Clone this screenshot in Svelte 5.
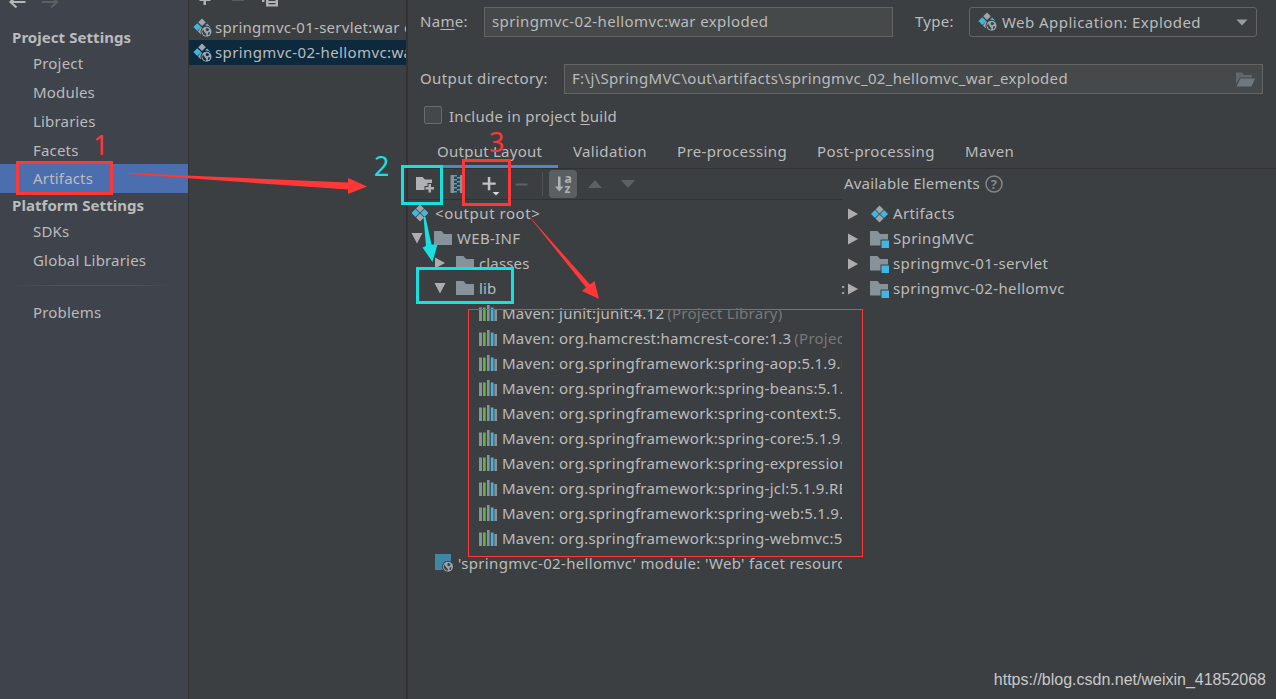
<script lang="ts">
  const projectItems = ["Project", "Modules", "Libraries", "Facets", "Artifacts"];
  const platformItems = ["SDKs", "Global Libraries"];
  const selectedItem = "Artifacts";

  const artifacts = [
    "springmvc-01-servlet:war exploded",
    "springmvc-02-hellomvc:war exploded",
  ];

  const tabs = [
    "Output Layout",
    "Validation",
    "Pre-processing",
    "Post-processing",
    "Maven",
  ];

  const libraries = [
    { name: "Maven: junit:junit:4.12", note: "(Project Library)" },
    { name: "Maven: org.hamcrest:hamcrest-core:1.3", note: "(Project Library)" },
    { name: "Maven: org.springframework:spring-aop:5.1.9.RELEASE" },
    { name: "Maven: org.springframework:spring-beans:5.1.9.RELEASE" },
    { name: "Maven: org.springframework:spring-context:5.1.9.RELEASE" },
    { name: "Maven: org.springframework:spring-core:5.1.9.RELEASE" },
    { name: "Maven: org.springframework:spring-expression:5.1.9.RELEASE" },
    { name: "Maven: org.springframework:spring-jcl:5.1.9.RELEASE" },
    { name: "Maven: org.springframework:spring-web:5.1.9.RELEASE" },
    { name: "Maven: org.springframework:spring-webmvc:5.1.9.RELEASE" },
  ];

  const modules = ["SpringMVC", "springmvc-01-servlet", "springmvc-02-hellomvc"];
</script>

{#snippet diamonds()}
  <svg class="icon" width="18" height="18" viewBox="0 0 18 18">
    <path d="M9 0.5l4 4-4 4-4-4zM9 9.5l4 4-4 4-4-4z" fill="#9aa7b0" />
    <path d="M4.5 5l4 4-4 4-4-4zM13.5 5l4 4-4 4-4-4z" fill="#40b6e0" />
  </svg>
{/snippet}

{#snippet globe(bg)}
  <circle cx="13.5" cy="13.8" r="6" fill={bg} />
  <circle cx="13.5" cy="13.8" r="5" fill="#9aa7b0" />
  <path
    d="M10 11.6l2 3.2 1.4 1.2-.4 2-2.6-1.6-1.2-2.6zM13.6 9.8l2.6 1.4-.8 1.5-1.8.6-1-1.6zM15.2 14.2l2 .4-1.2 2.4-1.2-.4z"
    fill={bg}
  />
{/snippet}

{#snippet webArtifact(bg)}
  <svg class="icon" width="19" height="20" viewBox="0 0 19 20">
    <path d="M9 0.5l3.8 3.8-3.8 3.8-3.8-3.8zM8 9l3.5 3.5-3.5 4-3-3z" fill="#9aa7b0" />
    <path d="M4.3 5.2l3.9 3.9-3.9 3.9-3.9-3.9zM12.2 7.2l2-1.8 3 3.4v1z" fill="#40b6e0" />
    {@render globe(bg)}
  </svg>
{/snippet}

{#snippet folder()}
  <svg class="icon" width="18" height="16" viewBox="0 0 18 16">
    <path d="M0 1h7.5l2.5 3h8v11H0z" fill="#87939a" />
  </svg>
{/snippet}

{#snippet moduleFolder()}
  <svg class="icon" width="19" height="18" viewBox="0 0 19 18">
    <path d="M0 1h7.5l2.5 3h8v5.5h-7.5v6H0z" fill="#87939a" />
    <path d="M11.5 10.5h7.5v7.5h-7.5z" fill="#40b6e0" />
  </svg>
{/snippet}

{#snippet library()}
  <svg class="icon" width="18" height="16" viewBox="0 0 18 16">
    <path d="M0 2.5h3V16H0zM8 0h2.6v16H8zM15.3 4H18v12h-2.7z" fill="#87939a" />
    <path d="M4 2.5h2.7V16H4z" fill="#62b543" />
    <path d="M11.8 2.5h2.7V16h-2.7z" fill="#40b6e0" />
  </svg>
{/snippet}

{#snippet arrow(open)}
  <svg class="arrow" width="12" height="12" viewBox="0 0 12 12">
    <path d={open ? "M0.5 1h11L6 11.5z" : "M1 0.5L11 6 1 11.5z"} fill="#adadad" />
  </svg>
{/snippet}

<div class="window">
  <aside class="sidebar">
    <div class="history">
      <svg width="60" height="9" viewBox="0 0 60 9" fill="none" stroke-width="2.2">
        <path d="M16.5 2H1M7.5 -4L1.5 2l6 5.5" stroke="#b4b6b8" />
        <path d="M33 2h15.5M42 -4l6 6-6 5.5" stroke="#5d6062" />
      </svg>
    </div>
    <div class="heading">Project Settings</div>
    {#each projectItems as item}
      <div class="nav" class:selected={item === selectedItem}>{item}</div>
    {/each}
    <div class="heading">Platform Settings</div>
    {#each platformItems as item}
      <div class="nav">{item}</div>
    {/each}
    <div class="divider"></div>
    <div class="nav">Problems</div>
  </aside>

  <section class="artifacts">
    <div class="list-tools">
      <svg width="90" height="8" viewBox="0 0 90 8">
        <path d="M7.5 0H10v5H7.5zM3.5 0h11v1h-11z" fill="#afb1b3" />
        <path d="M36 0h12v1H36z" fill="#5a5d5f" />
        <path d="M66 0h2.5v2H66zM70 0h12v6.5H70z" fill="#afb1b3" />
        <path d="M72.5 0h7v1h-7zM72.5 3h7v1.3h-7z" fill="#3c3f41" />
      </svg>
    </div>
    {#each artifacts as artifact, i}
      <div class="artifact" class:active={i === 1}>
        {@render webArtifact(i === 1 ? "#0d293e" : "#3c3f41")}
        <span>{artifact}</span>
      </div>
    {/each}
  </section>

  <main class="editor">
    <div class="form-row name-row">
      <span class="label name-label">Na<u>m</u>e:</span>
      <div class="field name-field">springmvc-02-hellomvc:war exploded</div>
      <span class="label type-label">Type:</span>
      <div class="combo">
        {@render webArtifact("#3c3f41")}
        <span>Web Application: Exploded</span>
        <svg class="caret" width="12" height="7" viewBox="0 0 12 7">
          <path d="M0.5 0.5h11L6 6.5z" fill="#9a9da0" />
        </svg>
      </div>
    </div>

    <div class="form-row dir-row">
      <span class="label dir-label">Output directory:</span>
      <div class="field dir-field">
        <span>F:\j\SpringMVC\out\artifacts\springmvc_02_hellomvc_war_exploded</span>
        <svg width="19" height="15" viewBox="0 0 19 15">
          <path d="M0 0.5h6l2 2.5h8v2.5H4L0 12z" fill="#5f686d" />
          <path d="M4.5 6.5H19L15.5 14.5H0.5z" fill="#6e797f" />
        </svg>
      </div>
    </div>

    <div class="check-row">
      <span class="checkbox"></span>
      <span class="label">Include in project <u>b</u>uild</span>
    </div>

    <div class="tabs">
      {#each tabs as tab, i}
        <div class="tab tab-{i}" class:current={i === 0}>{tab}</div>
      {/each}
    </div>

    <div class="panes">
      <div class="layout-pane">
        <div class="toolbar">
          <svg class="new-folder" width="19" height="17" viewBox="0 0 19 17">
            <path d="M0 1h6.5L9 3.5h7V7h-4.5v3H8.5v4H0z" fill="#afb1b3" />
            <path d="M12.5 8H15v3h3v2.5h-3v3h-2.5v-3h-3V11h3z" fill="#afb1b3" />
          </svg>
          <svg class="archive" width="13" height="18" viewBox="0 0 13 18">
            <path d="M0.5 0H13v18H0.5z" fill="#87939a" />
            <path d="M4 0h6v18H4z" fill="#31414a" />
            <path
              d="M4 0h3v1.5H4zM7 2h3v1.5H7zM4 4h3v1.5H4zM7 6h3v1.5H7zM4 8h3v1.5H4zM7 10h3v1.5H7zM4 12h3v1.5H4zM7 14h3v1.5H7zM4 16h3v1.5H4z"
              fill="#4aa3c4"
            />
          </svg>
          <svg class="add" width="18" height="19" viewBox="0 0 18 19">
            <path d="M5.8 0h2.5v5.5h5.4v2.3H8.3v5.4H5.8V7.8H0.5V5.5h5.3z" fill="#c0c2c4" />
            <path d="M10.5 15h7L14 18.5z" fill="#d4d6d8" />
          </svg>
          <svg class="remove" width="13" height="3" viewBox="0 0 13 3">
            <path d="M0.5 0.5h12v2H0.5z" fill="#5e6163" />
          </svg>
          <span class="tool-divider"></span>
          <span class="sort">
            <svg width="28" height="28" viewBox="0 0 28 28">
              <path d="M9 6.5h2.5v10h3L10.3 21.5 6 16.5h3z" fill="#afb1b3" />
              <text x="15.5" y="13">a</text>
              <text x="15.5" y="22.5">z</text>
            </svg>
          </span>
          <svg class="up" width="14" height="8" viewBox="0 0 14 8">
            <path d="M0 8h14L7 0z" fill="#5e6163" />
          </svg>
          <svg class="down" width="14" height="8" viewBox="0 0 14 8">
            <path d="M0 0h14L7 8z" fill="#5e6163" />
          </svg>
        </div>

        <div class="tree">
          <div class="row root">
            {@render diamonds()}<span>&lt;output root&gt;</span>
          </div>
          <div class="row webinf">
            {@render arrow(true)}{@render folder()}<span>WEB-INF</span>
          </div>
          <div class="row child">
            {@render arrow(false)}{@render folder()}<span>classes</span>
          </div>
          <div class="row child">
            {@render arrow(true)}{@render folder()}<span>lib</span>
          </div>
          {#each libraries as lib}
            <div class="row lib">
              {@render library()}
              <span>{lib.name}{#if lib.note}<em>{lib.note}</em>{/if}</span>
            </div>
          {/each}
          <div class="row facet">
            <svg class="icon" width="19" height="18" viewBox="0 0 19 18">
              <path d="M0 0h16v16H0z" fill="#3e87a5" />
              <g transform="translate(-0.5 -1)">{@render globe("#3c3f41")}</g>
            </svg>
            <span>'springmvc-02-hellomvc' module: 'Web' facet resources</span>
          </div>
        </div>
      </div>

      <div class="elements-pane">
        <div class="elements-title">
          <span>Available Elements</span>
          <svg width="18" height="18" viewBox="0 0 18 18">
            <circle cx="9" cy="9" r="8" fill="none" stroke="#84878a" stroke-width="1.5" />
            <text x="9" y="13.5" text-anchor="middle">?</text>
          </svg>
        </div>
        <div class="row element">
          {@render arrow(false)}{@render diamonds()}<span>Artifacts</span>
        </div>
        {#each modules as module, i}
          <div class="row element" class:clipped={i === 2}>
            {@render arrow(false)}{@render moduleFolder()}<span>{module}</span>
          </div>
        {/each}
      </div>
    </div>
  </main>

  <!-- walkthrough marks drawn over the dialog -->
  <svg class="marks" width="1276" height="699" viewBox="0 0 1276 699">
    <g fill="none" stroke="#ff3737">
      <rect x="17.5" y="162.5" width="94" height="31" stroke-width="3" />
      <rect x="463.5" y="160.5" width="46" height="44" stroke-width="3" />
      <rect x="468.5" y="309.5" width="394" height="247" stroke-width="1" />
    </g>
    <g fill="none" stroke="#18dfe0" stroke-width="3">
      <rect x="402.5" y="166.5" width="39" height="37" />
      <rect x="417.5" y="268.5" width="95" height="34" />
    </g>
    <path d="M128 173L348 182.5V178L367 186.5L348 194V189.5L128 174z" fill="#ff3737" />
    <path d="M525.5 212L590 284.5L594.5 281L599 299L582 291L586 287.5z" fill="#ff3737" />
    <path d="M423.5 217h2L431.5 244.5H437.5L432.500 262L422.500 247.500L426 246z" fill="#18dfe0" />
    <text class="one" x="93" y="155">1</text>
    <text class="two" x="374" y="176">2</text>
    <text class="three" x="489" y="152">3</text>
  </svg>

  <div class="watermark">https://blog.csdn.net/weixin_41852068</div>
</div>

<style>
  :global(body) {
    margin: 0;
    background: #3c3f41;
  }

  .window {
    position: relative;
    display: flex;
    width: 1276px;
    height: 699px;
    overflow: hidden;
    background: #3c3f41;
    color: #bbbbbb;
    font-family: "Noto Sans", "Open Sans", sans-serif;
    font-size: 15px;
    letter-spacing: 0.3px;
    line-height: 25px;
    white-space: nowrap;
  }

  svg {
    display: block;
    flex-shrink: 0;
  }

  u {
    text-decoration: underline;
    text-underline-offset: 2px;
  }

  /* Sidebar */
  .sidebar {
    box-sizing: border-box;
    width: 189px;
    flex-shrink: 0;
    border-right: 1px solid #323232;
    background: #3f434c;
    letter-spacing: 0.18px;
  }

  .history {
    height: 25px;
    padding-left: 9px;
  }

  .heading {
    height: 24px;
    padding-left: 12px;
    font-weight: 700;
    letter-spacing: 0.06px;
  }

  .nav {
    height: 29px;
    padding-left: 33px;
    line-height: 28px;
  }

  .nav.selected {
    margin-top: -1px;
    background: #4b6eaf;
  }

  .divider {
    height: 1px;
    margin: 10px 12px 12px;
    background: linear-gradient(90deg, transparent, #505358 25%, #505358 75%, transparent);
  }

  /* Artifact list */
  .artifacts {
    box-sizing: border-box;
    width: 219px;
    flex-shrink: 0;
    border-right: 2px solid #323232;
    overflow: hidden;
  }

  .list-tools {
    height: 15px;
    padding-left: 7px;
  }

  .artifact {
    display: flex;
    align-items: center;
    gap: 3px;
    height: 25px;
    padding-left: 4px;
    letter-spacing: 0.27px;
  }

  .artifact.active {
    background: #0d293e;
    letter-spacing: 0.38px;
  }

  /* Form */
  .editor {
    flex: 1;
    min-width: 0;
  }

  .form-row {
    display: flex;
    align-items: center;
    height: 30px;
    padding-left: 12px;
  }

  .form-row .label {
    margin-top: -2px;
  }

  .name-row {
    padding-top: 7px;
  }

  .dir-row {
    margin-top: 27px;
  }

  .field,
  .combo {
    box-sizing: border-box;
    height: 30px;
    border: 1px solid #646464;
    line-height: 28px;
  }

  .field {
    padding-left: 7px;
    background: #45494a;
    line-height: 26px;
  }

  .name-label {
    width: 64px;
  }

  .name-field {
    width: 409px;
    letter-spacing: 0.38px;
  }

  .type-label {
    width: 54px;
    margin-left: 22px;
  }

  .combo {
    display: flex;
    align-items: center;
    width: 288px;
    padding: 0 8px;
    border-radius: 3px;
    letter-spacing: 0.46px;
  }

  .combo span {
    margin-left: 5px;
  }

  .caret {
    margin-left: auto;
  }

  .dir-label {
    width: 144px;
    letter-spacing: 0.4px;
  }

  .dir-field {
    display: flex;
    align-items: center;
    justify-content: space-between;
    width: 699px;
    padding-right: 7px;
    letter-spacing: 0.33px;
  }

  .dir-field span {
    margin-top: -2px;
  }

  .check-row {
    display: flex;
    align-items: center;
    gap: 7px;
    height: 26px;
    padding: 9px 0 0 16px;
    letter-spacing: 0.26px;
  }

  .checkbox {
    box-sizing: border-box;
    width: 18px;
    height: 18px;
    margin-top: -3px;
    border: 1px solid #6b6b6b;
    border-radius: 2px;
    background: #43494a;
  }

  /* Tabs */
  .tabs {
    box-sizing: border-box;
    display: flex;
    height: 40px;
    padding-left: 12px;
    border-bottom: 1px solid #323232;
  }

  .tab {
    box-sizing: border-box;
    height: 39px;
    padding: 10px 0 0 17px;
    letter-spacing: 0.37px;
  }

  .tab.current {
    border-bottom: 3px solid #4a88c7;
    letter-spacing: 0.25px;
  }

  .tab-0 {
    width: 138px;
    margin-right: -2px;
  }

  .tab-1 {
    width: 104px;
  }

  .tab-2 {
    width: 140px;
  }

  .tab-3 {
    width: 148px;
  }

  .panes {
    display: flex;
  }

  .layout-pane {
    width: 434px;
    margin-right: 1px;
    flex-shrink: 0;
    overflow: hidden;
  }

  .toolbar {
    box-sizing: border-box;
    display: flex;
    align-items: center;
    height: 31px;
    padding-left: 8px;
    border-bottom: 1px solid #323232;
  }

  .archive {
    margin-left: 15px;
  }

  .add {
    margin: 5px 0 0 19px;
  }

  .remove {
    margin-left: 15px;
  }

  .tool-divider {
    width: 1px;
    height: 24px;
    margin: 0 6px 0 14px;
    background: #515151;
  }

  .sort {
    border-radius: 4px;
    background: #5a5f62;
  }

  .sort text {
    fill: #afb1b3;
    font-size: 12px;
    font-weight: 700;
  }

  .up {
    margin-left: 11px;
  }

  .down {
    margin-left: 19px;
  }

  /* Trees */
  .tree {
    padding-top: 1px;
  }

  .row {
    display: flex;
    align-items: center;
    height: 25px;
  }

  .row span {
    margin-left: 5px;
  }

  .tree .row span {
    margin-top: -1px;
  }

  .tree .icon,
  .tree .arrow {
    margin-top: -1px;
  }

  .row em {
    margin-left: 3px;
    color: #787878;
    font-style: normal;
  }

  .root {
    padding-left: 3px;
    letter-spacing: 0.55px;
  }

  .root span {
    margin-left: 6px;
  }

  .webinf {
    padding-left: 3px;
  }

  .child {
    padding-left: 26px;
    letter-spacing: 0.15px;
  }

  .row .arrow {
    margin-right: 11px;
  }

  .child .arrow {
    margin-right: 10px;
  }

  .lib {
    padding-left: 71px;
    letter-spacing: 0.25px;
  }

  .facet {
    padding-left: 27px;
    letter-spacing: 0.33px;
  }

  .facet span {
    margin-left: 4px;
  }

  .elements-pane {
    flex: 1;
    letter-spacing: 0.37px;
  }

  .elements-title {
    display: flex;
    align-items: center;
    gap: 5px;
    height: 29px;
    padding: 0 0 3px 1px;
    letter-spacing: 0.2px;
  }

  .elements-title text {
    fill: #84878a;
    font-size: 13px;
    font-weight: 700;
  }

  .element {
    padding-left: 4px;
  }

  .element span {
    margin-left: 4px;
  }

  .element .icon {
    width: 19px;
  }

  .clipped::before {
    content: ":";
    width: 6px;
    margin-left: -6px;
  }

  /* Overlay */
  .marks {
    position: absolute;
    inset: 0;
  }

  .marks text {
    fill: #ff3737;
    font-size: 27px;
  }

  .marks .two {
    fill: #18dfe0;
  }

  .watermark {
    position: absolute;
    right: 10px;
    bottom: 7px;
    color: #c8c9ca;
    font-family: "Liberation Sans", sans-serif;
    font-size: 16px;
    letter-spacing: 0;
  }
</style>
